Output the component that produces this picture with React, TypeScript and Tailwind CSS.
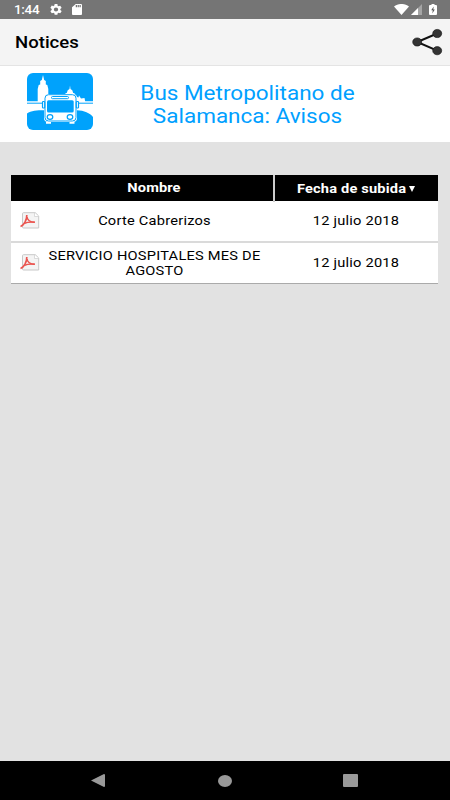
import type { ReactNode } from 'react'

interface Notice {
  title: string[]
  date: string
}

const notices: Notice[] = [
  { title: ['Corte Cabrerizos'], date: '12 julio 2018' },
  { title: ['SERVICIO HOSPITALES MES DE', 'AGOSTO'], date: '12 julio 2018' },
]

function Wide({ children, className = '' }: { children: ReactNode; className?: string }) {
  return <span className={`block scale-x-[1.125] whitespace-nowrap ${className}`}>{children}</span>
}

function StatusBar() {
  return (
    <div className="flex h-[19px] items-center bg-[#757575] pl-[14px] pr-[13px] text-white">
      <Wide className="mt-px w-[36px] origin-left text-[12px] leading-[19px] font-medium tracking-[-0.3px]">1:44</Wide>
      <svg className="h-[11px] w-[12px]" viewBox="2 2 20 20" preserveAspectRatio="none" fill="currentColor">
        <path d="M19.14 12.94c.04-.3.06-.61.06-.94s-.02-.64-.07-.94l2.03-1.58a.49.49 0 0 0 .12-.61l-1.92-3.32a.49.49 0 0 0-.59-.22l-2.39.96a7 7 0 0 0-1.62-.94l-.36-2.54A.48.48 0 0 0 13.92 2h-3.84a.48.48 0 0 0-.47.41l-.36 2.54a7 7 0 0 0-1.62.94l-2.39-.96a.48.48 0 0 0-.59.22L2.74 8.87a.48.48 0 0 0 .12.61l2.03 1.58a7 7 0 0 0 0 1.88l-2.03 1.58a.49.49 0 0 0-.12.61l1.92 3.32c.12.22.37.29.59.22l2.39-.96c.5.38 1.03.7 1.62.94l.36 2.54c.05.24.24.41.48.41h3.84c.24 0 .44-.17.47-.41l.36-2.54a7 7 0 0 0 1.62-.94l2.39.96c.22.08.47 0 .59-.22l1.92-3.32a.48.48 0 0 0-.12-.61zM12 15.6a3.6 3.6 0 1 1 0-7.2 3.6 3.6 0 0 1 0 7.2z" />
      </svg>
      <svg className="ml-[10px] h-[11px] w-[10px]" viewBox="4 2 16 20" preserveAspectRatio="none" fill="currentColor">
        <path d="M18 2h-8L4 8v12c0 1.100.9 2 2 2h12c1.100 0 2-.9 2-2V4c0-1.100-.9-2-2-2zm-6 6h-2V4h2zm3 0h-2V4h2zm3 0h-2V4h2z" />
      </svg>
      <svg className="ml-auto h-[11px] w-[15px]" viewBox="0 0 15 11" fill="currentColor">
        <path d="M7.500 11 0 2.600C4.300-.9 10.700-.9 15 2.600z" />
      </svg>
      <svg className="ml-[2px] h-[11px] w-[11px]" viewBox="0 0 11 11" fill="currentColor">
        <path d="M0 11 11 0v11z" opacity=".35" />
        <path d="M0 11 7 4v7z" />
      </svg>
      <svg className="ml-[7px] h-[11px] w-[8px]" viewBox="0 0 8 11">
        <path d="M2.500 1V0h3v1H7q1 0 1 1v8q0 1-1 1H1q-1 0-1-1V2q0-1 1-1z" fill="white" />
        <path d="M4.700 2.500 2.200 6.200h1.600L3.300 9.500 5.800 5.500H4.300z" fill="#555" />
      </svg>
    </div>
  )
}

function ShareIcon() {
  return (
    <svg className="h-[28px] w-[32px]" viewBox="0 0 32 28">
      <path d="M26.200 5.500 6.200 14l20 8.700" fill="none" stroke="#111" strokeWidth="2" />
      <g fill="#333" stroke="#111" strokeWidth=".6">
        <ellipse cx="26.200" cy="5.500" rx="4.500" ry="4.100" />
        <ellipse cx="6.200" cy="14" rx="4.500" ry="4.100" />
        <ellipse cx="26.200" cy="22.700" rx="4.500" ry="4.100" />
      </g>
    </svg>
  )
}

function BusLogo() {
  return (
    <svg className="h-[57px] w-[66px]" viewBox="0 0 66 57">
      <rect width="66" height="57" rx="6" fill="#00a2fc" />
      {/* skyline */}
      <path d="M10.700 29.500V16l1-4 1.500-.5V8l1.600-1L16 2l1.200 5 1.600 1v3.500l1.500.5 1 4v13.500z" fill="white" />
      <path d="M38.500 23v-3h1.300q.5-3.300 2.700-4l.5-3.500.5 3.500q2.200.7 2.700 4h1.300v3z" fill="white" />
      <path d="M48 29v-4l2-1 1.500.5.500-2 1 1.500 1 1.500 3.500-.5.8 4z" fill="white" />
      {/* river banks */}
      <path d="M0 28.300h66V44c-3-4-9-6.500-16-6.700H17C10 37.300 4 37.700 0 40.500z" fill="white" />
      <path d="M0 30.200h16M50 30.200h16" stroke="#00a2fc" strokeWidth="1" />
      <rect x="17" y="21" width="33" height="28" rx="4" fill="white" />
      <rect x="18" y="21.700" width="31" height="26.300" rx="3.500" fill="white" stroke="#00a2fc" strokeWidth="1" />
      <rect x="20" y="27.300" width="26.700" height="12.300" rx="1.500" fill="#00a2fc" />
      <rect x="24.500" y="23.500" width="17" height="2.200" rx="1" fill="white" stroke="#00a2fc" strokeWidth="1" />
      <g fill="white" stroke="#00a2fc" strokeWidth="1.200">
        <ellipse cx="23" cy="44" rx="2.800" ry="2.400" />
        <ellipse cx="43" cy="44" rx="2.800" ry="2.400" />
        <rect x="15.500" y="28.500" width="2.200" height="6.500" rx=".8" />
        <rect x="49.300" y="28.500" width="2.200" height="6.500" rx=".8" />
      </g>
      <path d="M19 49h5v1.800h-5zM42.500 49h5v1.800h-5z" fill="white" />
    </svg>
  )
}

function PdfIcon() {
  return (
    <svg className="-mt-px h-[17px] w-[20px] shrink-0" viewBox="0 0 20 17">
      <path d="M3.500.7h11.800L18.700 4v12H3.500q-1 0-1-1V1.700q0-1 1-1z" fill="#f4f4f4" stroke="#c8c8c8" />
      <path d="M14.500 1v3.500h4" fill="#fff" stroke="#ccc" strokeWidth=".7" />
      <path d="M.5 14.500C4 13.300 7 8 6.800 3" fill="none" stroke="#ea5550" strokeWidth="1.700" />
      <path d="M7 5c.3 3 3 5 7.800 5.300" fill="none" stroke="#ea5550" strokeWidth="1.500" />
      <path d="M4 11.500c3-1.300 6-1.700 10.800-1.300" fill="none" stroke="#ea5550" strokeWidth="1.400" />
    </svg>
  )
}

function NoticeTable() {
  return (
    <div className="mx-[11px] mr-[12px] mt-[33px] bg-white text-[13px] text-black">
      <div className="grid h-[26px] grid-cols-[263px_1fr] bg-black text-center font-bold leading-[26px] text-white">
        <div className="border-r border-[#ccc] pl-[24px]"><Wide className="tracking-[0.1px]">Nombre</Wide></div>
        <div className="flex items-center justify-center border-l border-[#ccc] pl-[5px] pt-px">
          <Wide className="tracking-[0.15px]">Fecha de subida</Wide>
          <svg className="ml-[9px] h-[6px] w-[6px]" viewBox="0 0 6 6" fill="white"><path d="M0 0h6L3 6z" /></svg>
        </div>
      </div>
      {notices.map(n => (
        <div
          key={n.title[0]}
          className="grid h-[42px] grid-cols-[263px_1fr] items-center border-b-2 border-[#dadada] text-center last:h-[41px] last:border-b last:border-[#aaa]"
        >
          <div className="flex items-center pl-[9px]">
            <PdfIcon />
            <div className="-mt-px flex-1 pr-[5px] leading-[15px] tracking-[0.2px]">
              {n.title.map(line => <Wide key={line}>{line}</Wide>)}
            </div>
          </div>
          <Wide className="tracking-[0.2px]">{n.date}</Wide>
        </div>
      ))}
    </div>
  )
}

export default function App() {
  return (
    <div className="flex h-screen w-full flex-col overflow-hidden bg-[#e2e2e2] font-['Roboto',sans-serif]">
      <StatusBar />
      <header className="flex h-[47px] items-center justify-between border-b border-[#e4e4e4] bg-[#f4f4f4] pl-[15px] pr-[7px]">
        <Wide className="mt-[2px] origin-left text-[16.5px] font-medium text-black">Notices</Wide>
        <ShareIcon />
      </header>
      <section className="flex h-[76px] bg-white pl-[27px] pt-[7px]">
        <BusLogo />
        <div className="ml-[47px] mt-[9px] w-[215px] text-center text-[20px] leading-[23px] text-[#00a0ff]">
          <Wide>Bus Metropolitano de</Wide>
          <Wide>Salamanca: Avisos</Wide>
        </div>
      </section>
      <NoticeTable />
      <nav className="mt-auto flex h-[39px] items-center bg-black pl-[91px] text-[#999]">
        <svg className="h-[13px] w-[14px]" viewBox="0 0 14 13" fill="currentColor"><path d="M0 6.500 13 0q1 0 1 1v11q0 1-1 1z" /></svg>
        <div className="ml-[113px] h-[12px] w-[14px] rounded-[50%] bg-[#999]" />
        <div className="ml-[111px] h-[13px] w-[15px] rounded-[1px] bg-[#999]" />
      </nav>
    </div>
  )
}
